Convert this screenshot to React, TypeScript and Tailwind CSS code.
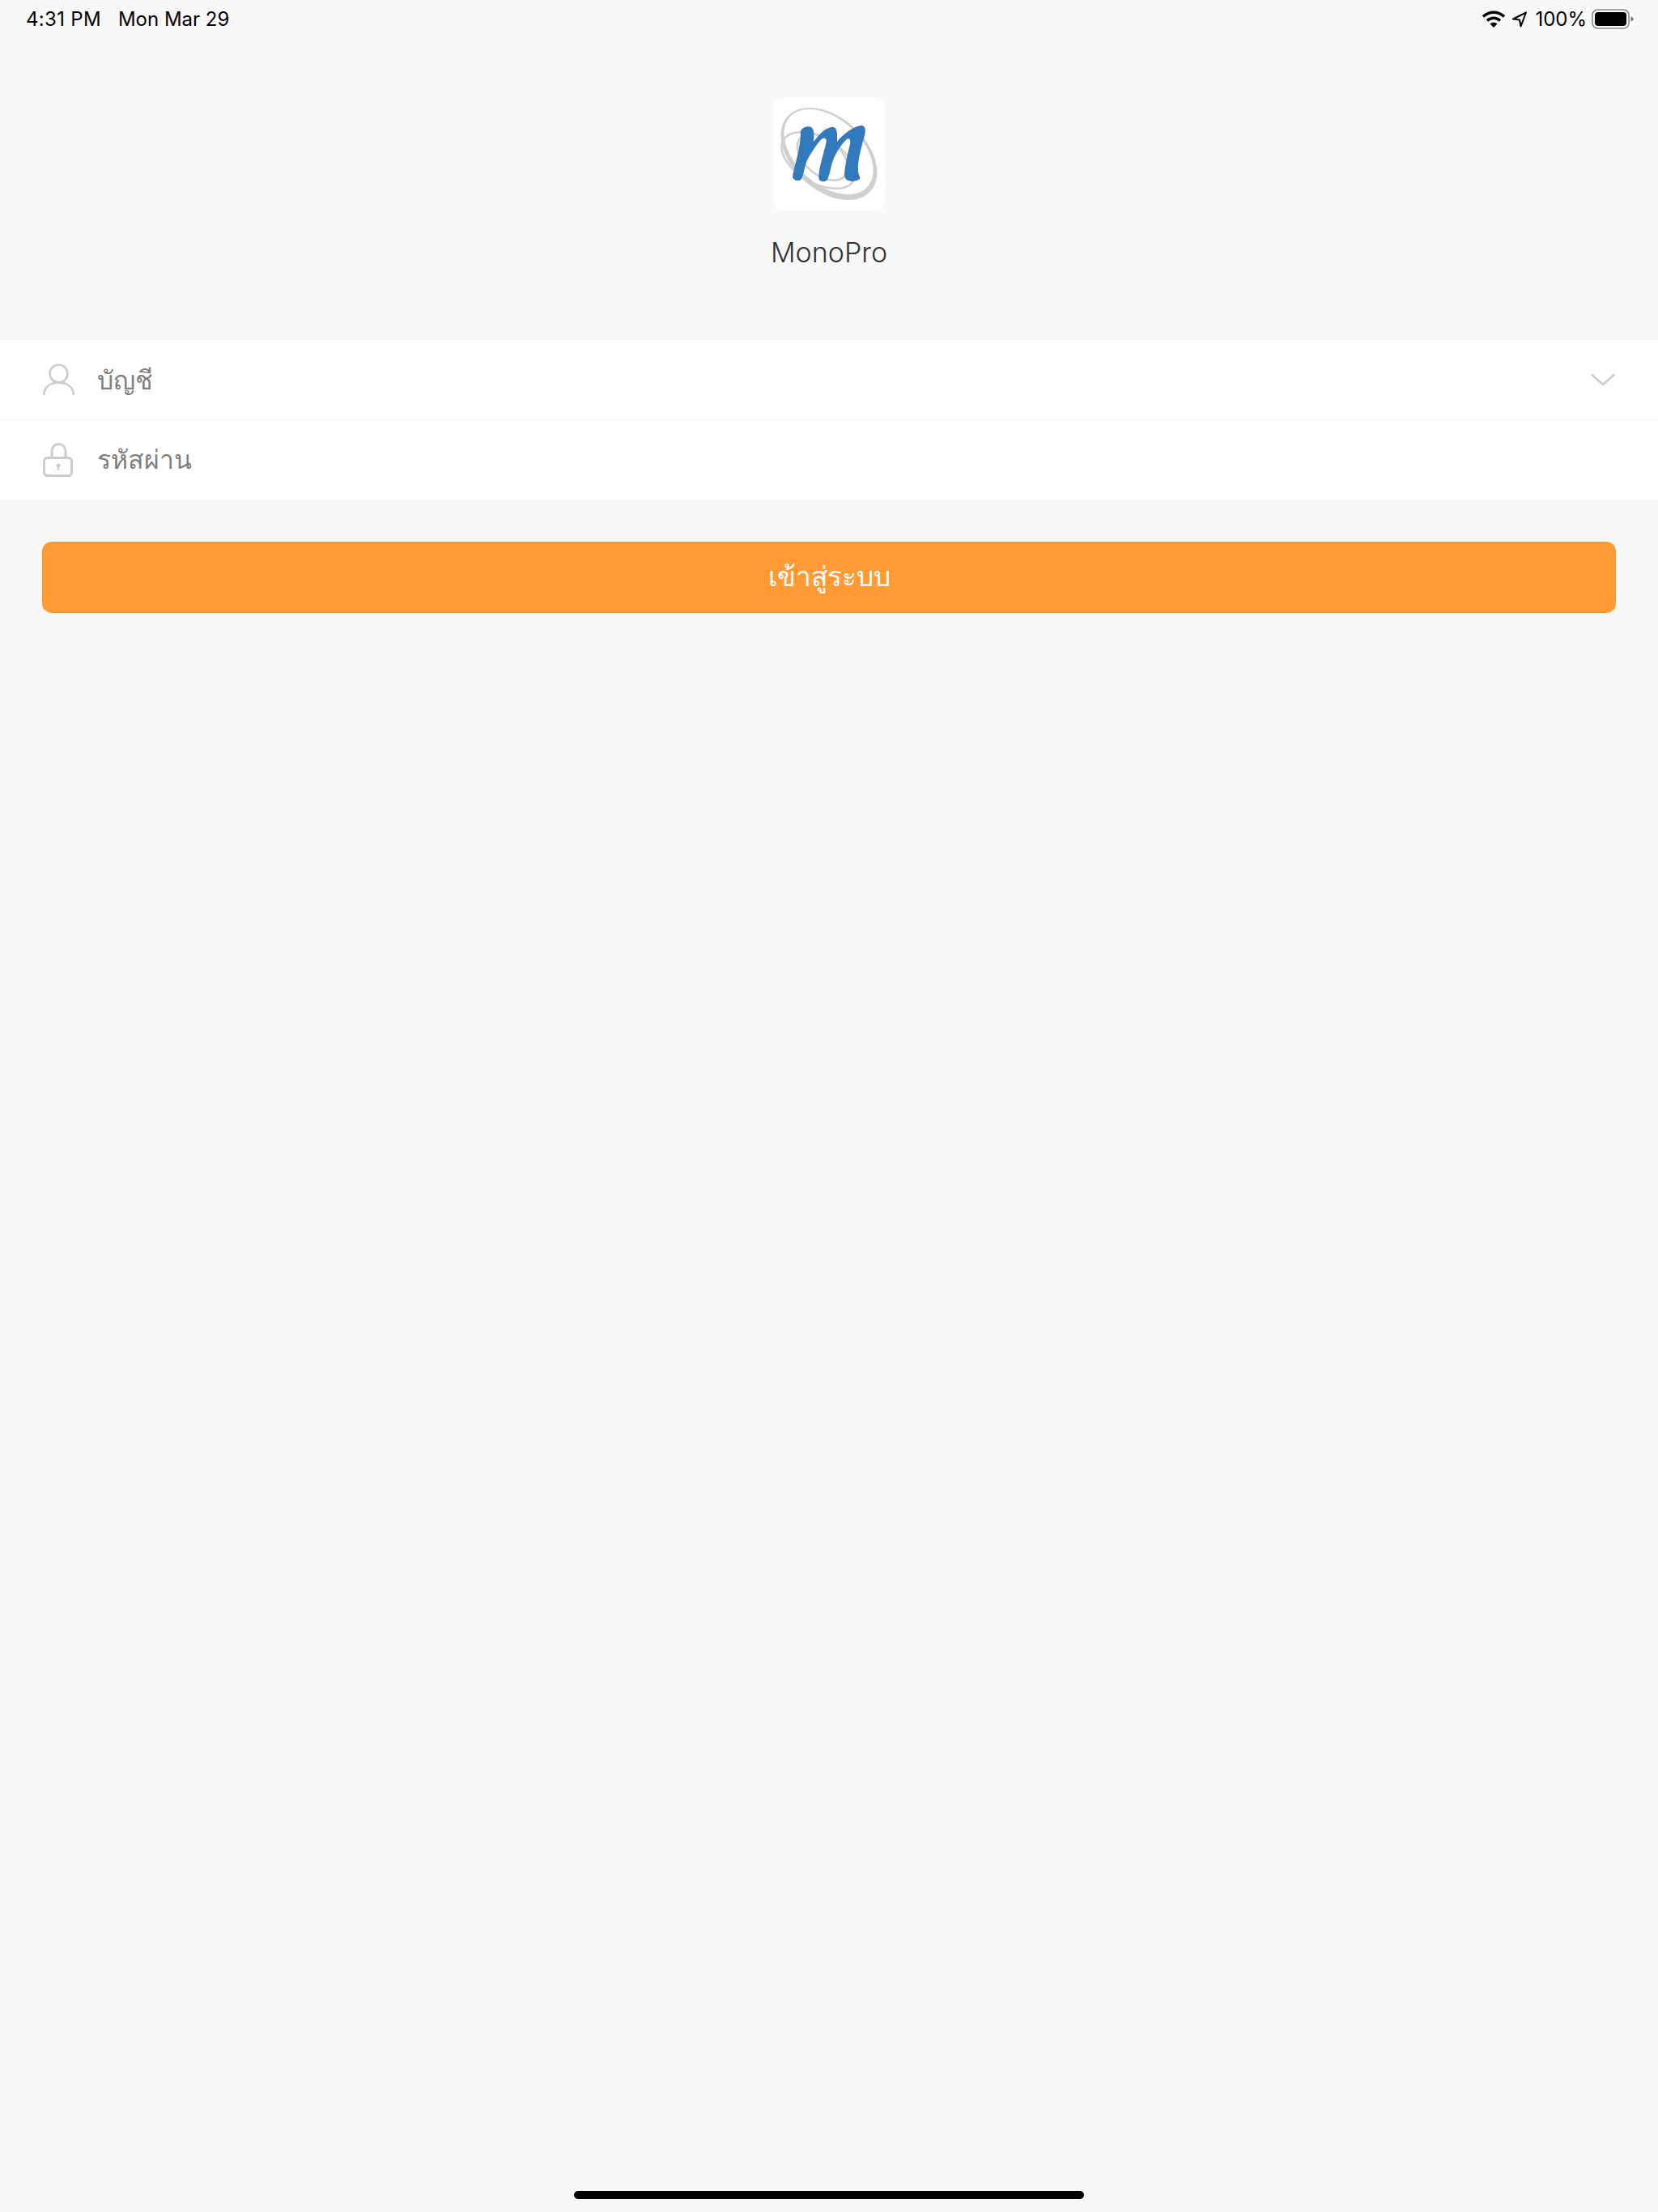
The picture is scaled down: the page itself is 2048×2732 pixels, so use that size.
import React from 'react';

const StatusBar: React.FC = () => (
  <div className="flex h-[48px] items-center justify-between pl-[32px] pr-[30px] text-[24px] leading-none text-black">
    <div className="flex gap-[21px]">
      <span className="tracking-[0.3px]">4:31 PM</span>
      <span>Mon Mar 29</span>
    </div>
    <div className="flex items-center">
      <svg width="28" height="22" viewBox="0 0 28 22" className="mr-[8px]">
        <path d="M1 7.5C8.5 0.5 19.5 0.5 27 7.5" fill="none" stroke="#000" strokeWidth="3.4" />
        <path d="M6 12.5C10.8 8.2 17.2 8.2 22 12.5" fill="none" stroke="#000" strokeWidth="3.4" />
        <path d="M9.5 16.5C12 14 16 14 18.5 16.5L14 21Z" fill="#000" />
      </svg>
      <svg width="20" height="22" viewBox="0 0 20 22" className="mr-[9px]">
        <path d="M18 2.5L2 10.5L10 11.5L11.5 19.5Z" fill="none" stroke="#000" strokeWidth="2" strokeLinejoin="round" />
      </svg>
      <span className="mr-[6px]">100%</span>
      <svg width="52" height="26" viewBox="0 0 52 26">
        <rect x="1" y="1" width="45" height="23" rx="6.5" fill="none" stroke="#8a8a8a" strokeWidth="1.6" />
        <rect x="4" y="4" width="39" height="17" rx="4" fill="#000" />
        <path d="M48.5 9.5C50.5 10 51.5 11 51.5 12.5C51.5 14 50.5 15 48.5 15.5Z" fill="#777" />
      </svg>
    </div>
  </div>
);

const Logo: React.FC = () => (
  <div className="flex h-[140px] w-[140px] items-center justify-center rounded-[14px] bg-white">
    <svg width="140" height="140" viewBox="0 0 140 140">
      <g fill="none" stroke="#d0d0d0" strokeWidth="2.5">
        <ellipse cx="57" cy="78" rx="50" ry="28" transform="rotate(30 57 78)" />
        <ellipse cx="62" cy="74" rx="36" ry="22" transform="rotate(40 62 74)" />
      </g>
      {/* outer ring, thin at upper left and thick at lower right */}
      <g transform="rotate(42 70 70)">
        <path
          fillRule="evenodd"
          fill="#cfcfcf"
          d="M1 70A69 45 0 1 0 139 70A69 45 0 1 0 1 70ZM3.5 68.5A64.5 40.5 0 1 1 132.5 68.5A64.5 40.5 0 1 1 3.5 68.5Z"
        />
      </g>
      <path
        d="M35 42C37 37 44 35 48 37C51 39 52 44 51 55C57 47 65 38 73 37C78 36 80 41 80 46L80 55C87 46 100 36 110 35C114 35 116 39 114 47C110 62 105 80 106 90C106 96 109 98 108 101C104 104 98 105 94 103C90 102 89 98 89 94C90 82 93 70 96 58C97 52 95 50 92 52C85 58 78 70 75 78C72 86 71 96 68 102C66 105 60 105 58 102C56 98 59 84 63 70C65 62 68 54 66 51C64 49 61 51 58 55C52 62 45 74 43 78C40 85 39 95 36 101C34 104 27 104 25 99C26 90 30 78 32 68C34 58 35 50 35 42Z"
        fill="#337ABD"
      />
    </svg>
  </div>
);

const UserIcon: React.FC = () => (
  <svg width="40" height="40" viewBox="0 0 40 40" fill="none" stroke="#cccccc" strokeWidth="2.6">
    <circle cx="19.5" cy="12.5" r="11" />
    <path d="M1.3 39C1.3 29 9 23.5 19.5 23.5C30 23.5 37.7 29 37.7 39" />
  </svg>
);

const LockIcon: React.FC = () => (
  <svg width="38" height="42" viewBox="0 0 38 42" fill="none" stroke="#cccccc" strokeWidth="3">
    <path d="M11 18V10.5C11 5 14.5 1.5 19.5 1.5C24.5 1.5 28 5 28 10.5V18" />
    <rect x="1.5" y="18.5" width="34" height="22" rx="4" />
    <circle cx="19" cy="28" r="2.5" fill="#cccccc" stroke="none" />
    <rect x="18" y="28" width="2" height="6" fill="#cccccc" stroke="none" />
  </svg>
);

const thai = "font-['Liberation_Sans',sans-serif]";

export default function App() {
  return (
    <div className="flex min-h-[2732px] flex-col bg-[#f8f8f8] font-['Inter',sans-serif]">
      <StatusBar />

      <div className="flex flex-col items-center pt-[72px]">
        <Logo />
        <div className="mt-[30px] text-[34px] font-light leading-[44px] text-[#333333]">MonoPro</div>
      </div>

      <div className="mt-[86px] bg-white">
        <div className="flex h-[99px] items-center border-b border-[#f9f9f9] pl-[53px] pr-[53px]">
          <UserIcon />
          <span className={`ml-[27px] flex-1 pt-[2px] text-[32px] text-[#808080] ${thai}`}>บัญชี</span>
          <svg width="30" height="16" viewBox="0 0 30 16" fill="none" stroke="#cccccc" strokeWidth="2.5">
            <path d="M1 1.5L15 14L29 1.5" />
          </svg>
        </div>
        <div className="flex h-[98px] items-center pl-[53px] pr-[53px]">
          <LockIcon />
          <span className={`ml-[29px] text-[32px] text-[#808080] ${thai}`}>รหัสผ่าน</span>
        </div>
      </div>

      <div className="mx-[52px] mt-[52px] flex h-[88px] items-center justify-center rounded-[12px] bg-[#ff9a35]">
        <span className={`text-[33.5px] text-white ${thai}`}>เข้าสู่ระบบ</span>
      </div>

      <div className="mt-auto flex justify-center pb-[16px]">
        <div className="h-[10px] w-[630px] rounded-full bg-black" />
      </div>
    </div>
  );
}
